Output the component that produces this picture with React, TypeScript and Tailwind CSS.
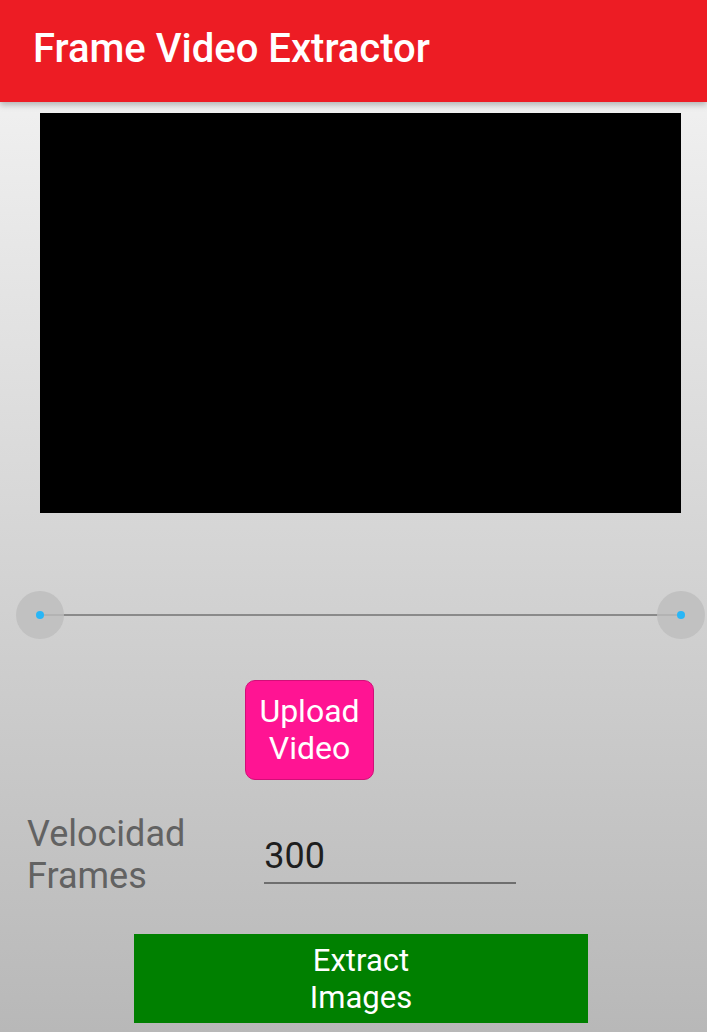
export default function App() {
  return (
    <div
      className="relative h-[1032px] w-[707px] overflow-hidden bg-gradient-to-b from-[#f6f6f6] to-[#b8b8b8]"
      style={{ fontFamily: "Roboto, 'Noto Sans', sans-serif" }}
    >
      {/* Barra superior */}
      <header className="relative z-10 flex h-[102px] items-center bg-[#ed1c24] pb-[4px] pl-[33px] shadow-[0_3px_6px_rgba(0,0,0,0.25)]">
        <h1 className="text-[40px] font-medium leading-none text-white">Frame Video Extractor</h1>
      </header>

      {/* Vista de video */}
      <div className="mx-[40px] mt-[11px] h-[400px] w-[641px] bg-black" />

      {/* Rango */}
      <div className="relative ml-[16px] mr-[2px] mt-[78px] flex h-[48px] items-center">
        <div className="absolute left-[24px] right-[24px] top-[23px] h-[2px] bg-[#8a8a8a]" />
        <div className="relative flex h-[48px] w-[48px] items-center justify-center rounded-full bg-[#bdbdbd]/80">
          <div className="h-[8px] w-[8px] rounded-full bg-[#29b6f6]" />
        </div>
        <div className="flex-1" />
        <div className="relative flex h-[48px] w-[48px] items-center justify-center rounded-full bg-[#bdbdbd]/80">
          <div className="h-[8px] w-[8px] rounded-full bg-[#29b6f6]" />
        </div>
      </div>

      {/* Subir video */}
      <div className="mt-[41px] pl-[245px]">
        <button className="flex h-[100px] w-[129px] flex-col items-center justify-center rounded-[10px] border border-[#d10f78] bg-[#ff1493] text-[32px] leading-[37px] text-white">
          <span>Upload</span>
          <span>Video</span>
        </button>
      </div>

      {/* Velocidad */}
      <div className="mt-[33px] flex items-start">
        <div className="pl-[27px] text-[36px] leading-[42px] text-[#626262]">
          <div>Velocidad</div>
          <div>Frames</div>
        </div>
        <div className="ml-[79px] mt-[22px] w-[252px] border-b-2 border-[#6e6e6e] pb-[5px] text-[36px] leading-[42px] text-[#1e1e1e]">
          300
        </div>
      </div>

      {/* Extraer */}
      <div className="mt-[37px] pl-[134px]">
        <button className="flex h-[89px] w-[454px] flex-col items-center justify-center bg-[#008000] text-[31px] leading-[37px] text-white">
          <span>Extract</span>
          <span>Images</span>
        </button>
      </div>
    </div>
  );
}
